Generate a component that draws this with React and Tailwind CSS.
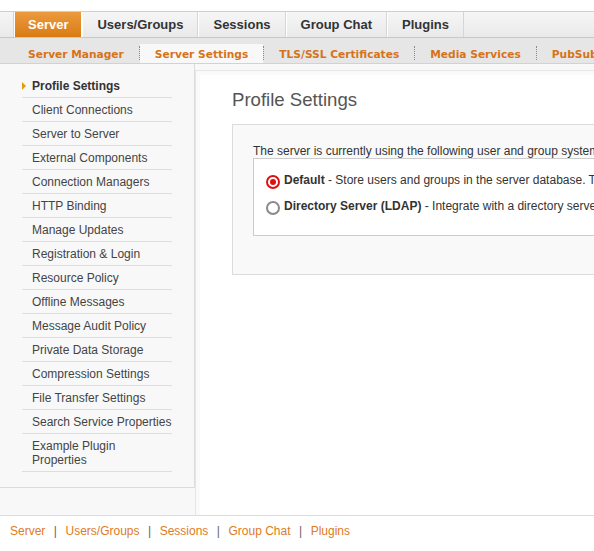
import React from 'react';

const mainTabs = ['Server', 'Users/Groups', 'Sessions', 'Group Chat', 'Plugins'];
const subTabs = ['Server Manager', 'Server Settings', 'TLS/SSL Certificates', 'Media Services', 'PubSub'];
const sideItems = [
  'Profile Settings',
  'Client Connections',
  'Server to Server',
  'External Components',
  'Connection Managers',
  'HTTP Binding',
  'Manage Updates',
  'Registration & Login',
  'Resource Policy',
  'Offline Messages',
  'Message Audit Policy',
  'Private Data Storage',
  'Compression Settings',
  'File Transfer Settings',
  'Search Service Properties',
  'Example Plugin Properties',
];

const sans = { fontFamily: '"Liberation Sans", Arial, sans-serif' };

const Radio = ({ checked }) => (
  <span
    className={`mt-[3px] flex h-[14px] w-[14px] shrink-0 items-center justify-center rounded-full border-2 bg-white ${
      checked ? 'border-[#e01010]' : 'border-[#8a8a8a]'
    }`}
  >
    {checked && <span className="h-[6px] w-[6px] rounded-full bg-[#e01010]" />}
  </span>
);

export default function App() {
  return (
    <div className="w-full overflow-hidden bg-white text-[#333]" style={sans}>
      {/* main tabs */}
      <div className="h-[11px]" />
      <div className="flex h-[26px] border-t border-[#cfcfcf] bg-gradient-to-b from-[#f6f6f6] to-[#e9e9e9]">
        <div className="w-[14px] border-r border-[#d6d6d6]" />
        {mainTabs.map((t, i) => (
          <div
            key={t}
            className={`flex items-center border-l border-r text-[13px] font-bold ${
              i === 0
                ? 'border-l-white border-r-white bg-gradient-to-b from-[#eb9a3c] to-[#d97b12] px-[13px] text-white'
                : 'border-l-white border-r-[#d6d6d6] px-[14px] text-[#333]'
            }`}
          >
            {t}
          </div>
        ))}
      </div>
      {/* sub tabs */}
      <div className="flex h-[27px] items-end border-t border-b border-t-[#c8c8c8] border-b-[#d2d2d2] bg-[#e6e6e6] pl-[13px]">
        {subTabs.map((t, i) => (
          <React.Fragment key={t}>
            {i > 0 && <div className="mb-[3px] h-[14px] border-l border-dotted border-[#7f8c99]" />}
            <div
              className={`flex h-[19px] items-center whitespace-nowrap px-[15px] pt-[2px] text-[10.65px] font-bold text-[#d6731a] ${
                i === 1 ? 'bg-[#f8f8f8]' : ''
              }`}
              style={{ fontFamily: '"DejaVu Sans", Verdana, sans-serif' }}
            >
              {t}
            </div>
          </React.Fragment>
        ))}
      </div>

      {/* body */}
      <div className="flex h-[451px]">
        <div className="w-[200px] shrink-0 bg-[#f8f8f8]">
          <div className="w-[195px] border-r border-b border-[#dcdcdc] pt-[10px] pb-[15px] pl-[22px]">
            {sideItems.map((s, i) => (
              <div
                key={s}
                className={`relative w-[150px] border-b border-[#dedede] pt-[5px] pb-[4px] pl-[10px] text-[12px] leading-[14px] ${
                  i === 0 ? 'font-bold text-[#333]' : 'text-[#444]'
                }`}
              >
                {i === 0 && (
                  <span className="absolute left-0 top-[8px] h-0 w-0 border-y-[4px] border-l-[4px] border-y-transparent border-l-[#e0a000]" />
                )}
                {s}
              </div>
            ))}
          </div>
        </div>
        <div className="flex-1 bg-[#f8f8f8] pt-[6px]">
          <div className="-ml-[5px] h-full border-t border-l border-[#e6e6e6] bg-[#fafafa] pl-[4px] pt-[4px]">
            <div className="h-full bg-white pl-[32px] pt-[14px]">
              <h1 className="whitespace-nowrap text-[18.6px] font-normal leading-[22px] text-[#555]">Profile Settings</h1>
              <div className="mt-[13px] w-[700px] border border-[#dcdcdc] bg-[#f9f9f9] pl-[20px] pt-[19px] pb-[38px]">
                <p className="whitespace-nowrap text-[12px] leading-[14px]">
                  The server is currently using the following user and group system. You can change the system below.
                </p>
                <div className="w-[700px] border border-[#cccccc] bg-white pl-[12px] pt-[13px] pb-[20px]">
                  <label className="flex items-start gap-[4px] whitespace-nowrap text-[12px] leading-[16px]">
                    <Radio checked />
                    <span>
                      <b>Default</b> - Store users and groups in the server database. This is the best option for simple deployments.
                    </span>
                  </label>
                  <label className="mt-[9px] flex items-start gap-[4px] whitespace-nowrap text-[12px] leading-[16px]">
                    <Radio />
                    <span>
                      <b>Directory Server (LDAP)</b> - Integrate with a directory server such as Active Directory or OpenLDAP.
                    </span>
                  </label>
                </div>
              </div>
            </div>
          </div>
        </div>
      </div>

      {/* footer */}
      <div className="flex h-[30px] items-center border-t border-[#dcdcdc] pl-[10px] text-[12px]">
        {mainTabs.map((t, i) => (
          <React.Fragment key={t}>
            {i > 0 && <span className="px-[8.5px] text-[#666]">|</span>}
            <span className="text-[#e07b21]">{t}</span>
          </React.Fragment>
        ))}
      </div>
    </div>
  );
}
